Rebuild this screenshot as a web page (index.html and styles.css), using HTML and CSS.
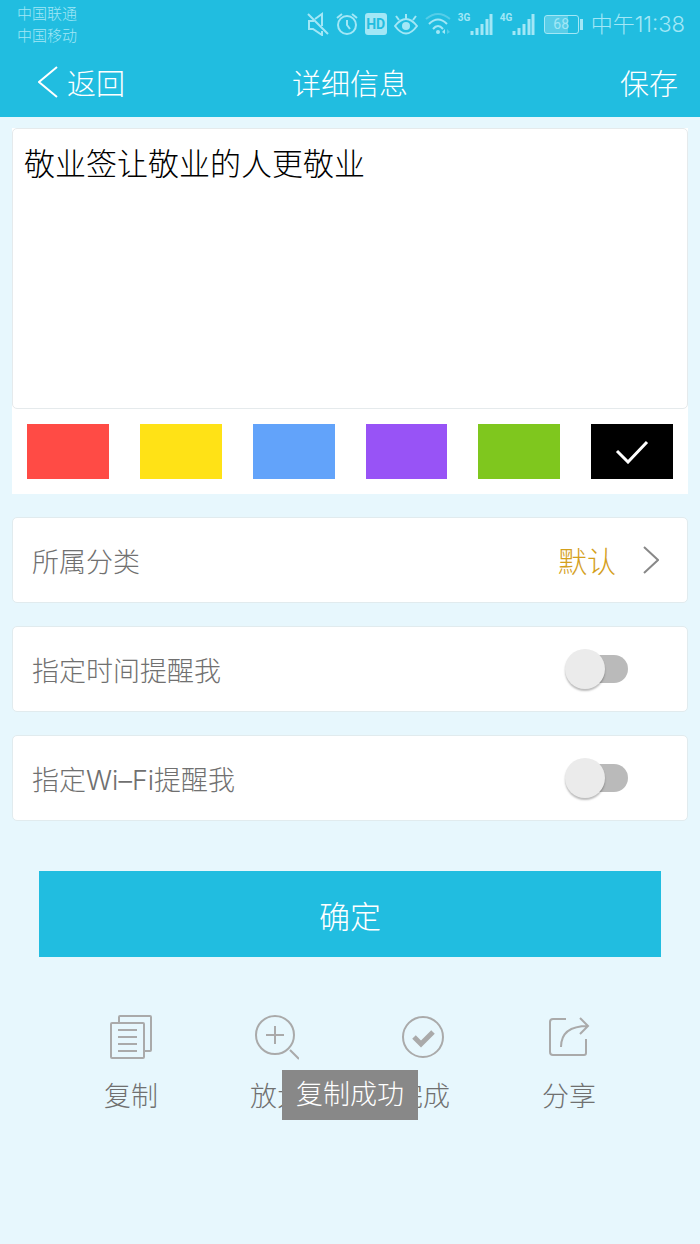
FILE: index.html
```html
<!DOCTYPE html>
<html lang="zh-CN">
<head>
<meta charset="utf-8">
<meta name="viewport" content="width=device-width, initial-scale=1">
<title>详细信息</title>
<link rel="stylesheet" href="styles.css">
</head>
<body>
<header class="header">
  <div class="status">
    <div class="carriers"><span>中国联通</span><span>中国移动</span></div>
    <div class="indicators">
      <svg class="mute" width="22" height="24" viewBox="0 0 22 24"><path d="M7 9H2v8h4l9 6V19M8 7l7-5v12M1 2l20 20"/></svg>
      <svg class="alarm" width="22" height="24" viewBox="0 0 22 24"><circle cx="11" cy="13" r="9"/><path d="M11 8v5l3 4M1 6l5-4M21 6l-5-4"/></svg>
      <span class="hd">HD</span>
      <svg class="eye" width="24" height="24" viewBox="0 0 24 24"><path d="M1 14q11-14 22 0q-11 15-22 0zM12 7V2M5 8L2 4M19 8l3-4"/><circle class="solid" cx="12" cy="14" r="4"/></svg>
      <svg class="wifi" width="26" height="24" viewBox="0 0 26 24"><path class="dim" d="M1 7q12-10 24 0"/><path d="M4 12q9-9 18 0M8 17q5-6 10 0"/><circle class="solid" cx="13" cy="20" r="2"/><path class="solid" d="M20 17v5l-3-2z"/><path class="solid dim" d="M22 17v5l3-2z"/></svg>
      <span class="signal"><b>3G</b><svg width="23" height="24" viewBox="0 0 23 24"><path d="M2 19v4M7 16v7M12 12v11M17 7v16M21 2v21"/></svg></span>
      <span class="signal"><b>4G</b><svg width="23" height="24" viewBox="0 0 23 24"><path d="M2 19v4M7 16v7M12 12v11M17 7v16M21 2v21"/></svg></span>
      <span class="battery">68</span>
      <time class="clock">中午11:38</time>
    </div>
  </div>
  <nav class="nav">
    <button class="nav-button back" type="button"><svg width="20" height="32" viewBox="0 0 20 32"><path d="M19 1L1 16l18 15"/></svg>返回</button>
    <h1 class="title">详细信息</h1>
    <button class="nav-button save" type="button">保存</button>
  </nav>
</header>

<main>
  <form class="form">
    <section class="editor">
      <textarea class="note" aria-label="内容">敬业签让敬业的人更敬业</textarea>
      <div class="swatches" role="radiogroup" aria-label="颜色">
        <label class="swatch red"><input type="radio" name="color" aria-label="红色"></label>
        <label class="swatch yellow"><input type="radio" name="color" aria-label="黄色"></label>
        <label class="swatch blue"><input type="radio" name="color" aria-label="蓝色"></label>
        <label class="swatch purple"><input type="radio" name="color" aria-label="紫色"></label>
        <label class="swatch green"><input type="radio" name="color" aria-label="绿色"></label>
        <label class="swatch black"><input type="radio" name="color" aria-label="黑色" checked><svg width="34" height="24" viewBox="0 0 34 24"><path d="M2 11l11 11L32 2"/></svg></label>
      </div>
    </section>

    <button class="row" type="button">
      <span>所属分类</span>
      <span class="value">默认<svg width="16" height="28" viewBox="0 0 16 28"><path d="M1 1l14 13L1 27"/></svg></span>
    </button>
    <label class="row switch-row">指定时间提醒我<input class="switch" type="checkbox" role="switch"></label>
    <label class="row switch-row">指定Wi–Fi提醒我<input class="switch" type="checkbox" role="switch"></label>

    <button class="confirm" type="button">确定</button>
  </form>

  <section class="actions">
    <button class="action" type="button">
      <svg width="44" height="46" viewBox="0 0 44 46"><path d="M10 8V2q0-1 1-1h30q1 0 1 1v33q0 1-1 1h-6"/><rect x="2" y="8" width="33" height="35" rx="1"/><path d="M9 15h19M9 22h19M9 29h19M9 36h19"/></svg>
      复制
    </button>
    <button class="action" type="button">
      <svg width="44" height="46" viewBox="0 0 44 46"><circle cx="20" cy="20" r="19"/><path d="M20 11v18M11 20h18M35 35l9 9"/></svg>
      放大
    </button>
    <button class="action" type="button">
      <svg width="44" height="46" viewBox="0 0 44 46"><circle cx="22" cy="22" r="20"/><path class="heavy" d="M13 22l7 7 12-12"/></svg>
      完成
    </button>
    <button class="action" type="button">
      <svg width="44" height="46" viewBox="0 0 44 46"><path d="M19 4H6Q3 4 3 7v30q0 3 3 3h31q2 0 2-2V24M14 32q0-21 27-21M33 3l8 8-8 8"/></svg>
      分享
    </button>
    <div class="toast" role="status">复制成功</div>
  </section>
</main>
</body>
</html>
```
FILE: styles.css
```css
* {
  box-sizing: border-box;
}

body {
  margin: 0;
  min-height: 100vh;
  background: #e7f7fd;
  color: #707070;
  font-family: Inter, "Noto Sans CJK SC", sans-serif;
  font-size: 27px;
  font-weight: 300;
}

button,
textarea {
  margin: 0;
  border: 0;
  font: inherit;
  color: inherit;
}

button {
  padding: 0;
  background: none;
  cursor: pointer;
}

svg {
  flex: none;
  fill: none;
  stroke: currentColor;
  stroke-width: 2;
}

.header {
  background: #21bde0;
  color: #fff;
}

.status {
  display: flex;
  justify-content: space-between;
  align-items: flex-start;
  padding: 3px 15px 0 17px;
  color: #a2e7f6;
}

.carriers {
  display: flex;
  flex-direction: column;
  font-size: 15px;
  line-height: 22px;
}

.indicators {
  display: flex;
  align-items: center;
  gap: 7px;
  height: 42px;
}

.hd {
  width: 22px;
  border-radius: 3px;
  background: #a2e7f6;
  color: #21bde0;
  font: bold 14px/22px Roboto, sans-serif;
  text-align: center;
}

.solid {
  fill: currentColor;
  stroke: none;
}

.dim {
  opacity: 0.4;
}

.signal {
  display: flex;
}

.signal b {
  width: 12px;
  font: bold 10px/12px Roboto, sans-serif;
}

.signal svg {
  stroke-width: 3;
}

.battery {
  position: relative;
  width: 35px;
  margin: 0 5px 0 2px;
  border: 1px solid #a2e7f6;
  border-radius: 3px;
  background: linear-gradient(90deg, #58cde8 70%, #21bde0 70%);
  font: 14px/17px Roboto, sans-serif;
  text-align: center;
}

.battery::after {
  content: "";
  position: absolute;
  top: 3px;
  right: -5px;
  width: 3px;
  height: 11px;
  background: #a2e7f6;
}

.clock {
  font-size: 22px;
  line-height: 24px;
}

.nav {
  display: grid;
  grid-template-columns: 1fr auto 1fr;
  align-items: center;
  height: 70px;
  padding: 0 22px;
  font-size: 29px;
}

.nav-button {
  display: flex;
  align-items: center;
  gap: 9px;
  justify-self: start;
}

.back {
  margin-left: 16px;
}

.save {
  justify-self: end;
}

.title {
  margin: 0;
  font-size: 29px;
  font-weight: 300;
}

.form {
  display: flex;
  flex-direction: column;
  gap: 23px;
  padding: 11px 12px 0;
}

.editor {
  background: #fff;
}

.note {
  display: block;
  width: 100%;
  height: 281px;
  padding: 12px 11px;
  border: 1px solid #e5eaec;
  border-radius: 5px;
  background: #fff;
  color: #000;
  font-size: 31px;
  line-height: 46px;
  resize: none;
}

.swatches {
  display: grid;
  grid-template-columns: repeat(6, 1fr);
  gap: 31px;
  padding: 15px;
}

.swatch {
  display: grid;
  place-items: center;
  height: 55px;
}

.swatch input {
  grid-area: 1 / 1;
  width: 100%;
  height: 100%;
  margin: 0;
  appearance: none;
}

.swatch svg {
  grid-area: 1 / 1;
  color: #fff;
  stroke-width: 3;
}

.red { background: #ff4b45; }
.yellow { background: #ffe216; }
.blue { background: #62a3fa; }
.purple { background: #9853f6; }
.green { background: #7fc71e; }
.black { background: #000; }

.row {
  display: flex;
  justify-content: space-between;
  align-items: center;
  height: 86px;
  padding: 0 28px 0 19px;
  border: 1px solid #e1ebee;
  border-radius: 5px;
  background: #fff;
}

.value {
  display: flex;
  align-items: center;
  gap: 27px;
  color: #d4a01c;
  font-size: 29px;
}

.value svg {
  color: #888;
}

.switch-row {
  padding-right: 59px;
}

.switch {
  position: relative;
  width: 60px;
  height: 28px;
  margin: 0;
  border-radius: 14px;
  background: #bababa;
  appearance: none;
}

.switch::before {
  content: "";
  position: absolute;
  top: -6px;
  left: -3px;
  width: 40px;
  height: 40px;
  border-radius: 50%;
  background: #ebebeb;
  box-shadow: 0 2px 2px #0004;
}

.switch:checked::before {
  left: 23px;
}

.confirm {
  height: 86px;
  margin: 27px 27px 0;
  background: #21bde0;
  color: #fff;
  font-size: 31px;
}

.actions {
  position: relative;
  display: grid;
  grid-template-columns: repeat(4, 1fr);
  padding: 58px 58px 0;
}

.action {
  display: flex;
  flex-direction: column;
  align-items: center;
  gap: 16px;
  line-height: 40px;
}

.action svg {
  color: #aaa;
}

.action .heavy {
  stroke-width: 5;
}

.toast {
  position: absolute;
  bottom: -3px;
  left: 50%;
  padding: 5px 14px;
  transform: translateX(-50%);
  background: #888;
  color: #fff;
  line-height: 40px;
  white-space: nowrap;
}
```
